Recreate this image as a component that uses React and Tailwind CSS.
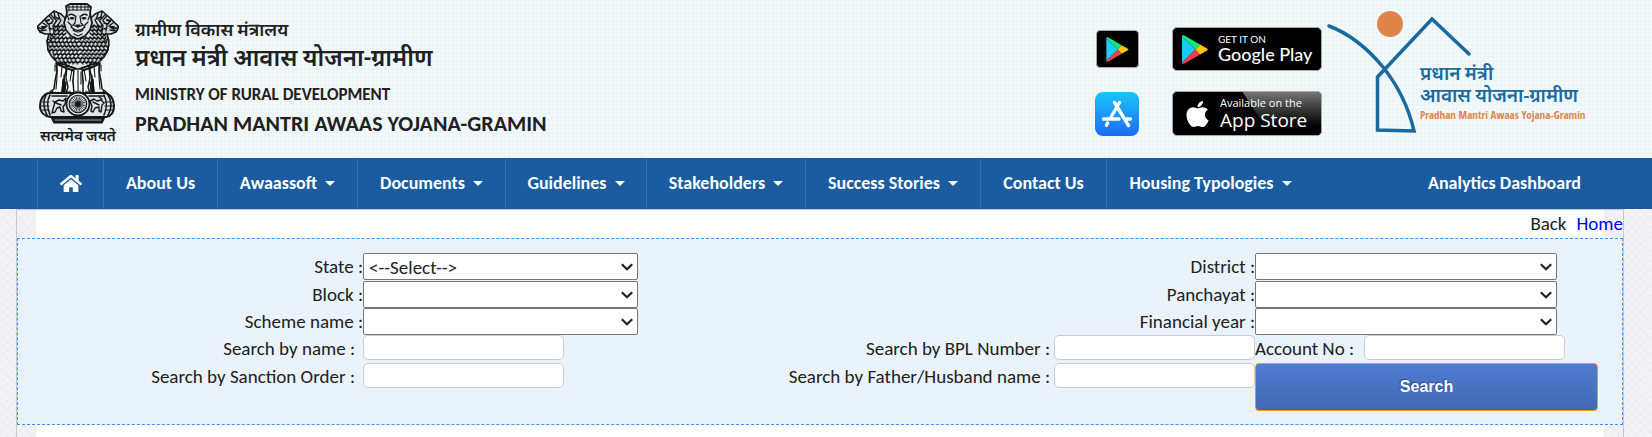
import React from "react";
import { FaHome, FaApple } from "react-icons/fa";

const MENU = [
  { label: "About Us", width: "w-[114px]" },
  { label: "Awaassoft", width: "w-[140px]", menu: true },
  { label: "Documents", width: "w-[148px]", menu: true },
  { label: "Guidelines", width: "w-[141px]", menu: true },
  { label: "Stakeholders", width: "w-[159px]", menu: true },
  { label: "Success Stories", width: "w-[175px]", menu: true },
  { label: "Contact Us", width: "w-[126px]" },
  { label: "Housing Typologies", width: "w-[208px]", menu: true },
];

/* Overlapping curls of the lions' manes, row by row: [y, half width]. */
const MANE_ROWS = [
  [22, 24], [26, 26], [30, 28], [34, 30], [38, 31],
  [42, 31], [46, 30], [50, 27], [54, 24], [58, 20],
];

function maneCurls() {
  const out = [];
  MANE_ROWS.forEach(([y, half], r) => {
    for (let x = 41 - half + (r % 2) * 2; x < 41 + half - 2; x += 4) {
      if (y < 34 && Math.abs(x + 2 - 41) < 13) continue;
      const lean = x < 41 ? -1 : 1;
      out.push(`M${x} ${y}q${2 + lean} 4 4 0`);
      out.push(`M${x + 2} ${y + 1}l${lean} 2`);
    }
  });
  return out.join("");
}

function SideLion() {
  return (
    <g>
      <path d="M28 15 24 11 17 8 10 14 4 20 0 24 3 29 8 31 12 31 10 38 11 47 15 54 20 59 27 62 32 58 30 40Z" fill="#d3d8da" strokeWidth="1.6" />
      <path d="M0 24l5 2 4-2M3 28l6-1M8 17l3 4 4-1M6 20l4 3M12 13l4 4M17 9l1 5 4 2M14 12l5 5M21 11l2 5M16 18l-4 4 1 6M20 17l-4 6 1 6M24 17l-4 7 2 5M12 25l3 1M13 31l4 3M11 36l5 3" strokeWidth="1.4" />
      <path d="M9 18l3-1M5 24h3" strokeWidth="2" />
      <path d="M19 60 20 68 18 78 17 86 14 88 11 91 22 92 25 89 26 79 29 68 29 62Z" fill="#f8fbfc" strokeWidth="1.5" />
      <path d="M30 63 29 75 31 84 29 90 36 91 38 87 36 78 39 65Z" fill="#f8fbfc" strokeWidth="1.4" />
      <path d="M20 62v12l-1 12M25 64l-1 10M35 66l-2 12M18 62v6M27 72l1 12M14 90l2-2M17 91l1-2M20 91l1-2M31 90v-2M33 90v-2" />
      <path d="M26 76l3 4-1 9-3 1z" fill="#161616" />
      <path d="M20 61l9 4 9 3" strokeWidth="2" />
    </g>
  );
}

function Abacus() {
  return (
    <g>
      <path d="M12 90C6 91 3 97 3 103c0 6 4 10 10 11h56c6-1 8-5 8-11 0-6-3-12-9-13Z" fill="#dfe3e5" strokeWidth="2" />
      <path d="M9 92c-3 5-3 13 1 20M13 92c-3 5-3 13 0 20M71 92c4 6 4 14 0 20M67 92c3 6 3 14 0 20" strokeWidth="1.6" />
      <path d="M5 99h7M4 103h8M5 107h7M68 99h8M68 103h9M68 107h8" />
      <path d="M15 93h15M52 93h15" strokeWidth="1.6" />
      <path d="M16 106l2-7 4-2 4 1 3-3-1 6-2 3 1 5-3-1-1-4-3 1-2 4-3 1zM19 100l5 2M16 98l2 2" strokeWidth="1.4" />
      <path d="M53 98l4-2 3 2 4-1 3 3-2 2-1 7-2-1v-4l-4 1-2 4-2-1 1-5zM56 99l6 3M65 96l-3-2" strokeWidth="1.4" />
      <path d="M14 114h54l-3 6H17z" fill="#161616" strokeWidth="1.2" />
      <path d="M18 117h46" stroke="#aab0b3" strokeDasharray="3 1" />
      <circle cx="41" cy="101" r="11.5" fill="#eef2f4" strokeWidth="1.8" />
      <circle cx="41" cy="101" r="8.8" />
      {Array.from({ length: 12 }, (_, i) => (
        <path key={i} d="M41 93v16" strokeWidth=".7" transform={`rotate(${i * 15} 41 101)`} />
      ))}
      <circle cx="41" cy="101" r="2" fill="#161616" />
    </g>
  );
}

function Emblem() {
  return (
    <div className="flex w-[82px] shrink-0 flex-col items-center">
      <svg viewBox="0 0 82 122" className="h-[122px] w-[82px]" fill="none" stroke="#161616" strokeWidth="1.1" strokeLinecap="round" strokeLinejoin="round" role="img" aria-label="State Emblem of India">
        <SideLion />
        <g transform="translate(82 0) scale(-1 1)"><SideLion /></g>
        <path d="M27 22 24 36 18 46 24 58 34 62 41 66 48 62 58 58 64 46 58 36 55 22Z" fill="#dfe3e5" stroke="none" />
        <path d={maneCurls()} strokeWidth="1.35" />
        <path d="M27 61 41 67 55 61" strokeWidth="1.8" />
        <path d="M37 66 36 78 37 91H46L46 78 45 66Z" fill="#f8fbfc" strokeWidth="1.5" />
        <path d="M41 67v22M44 69v12M39 90v-2M43 90v-2" />
        <path d="M29 3 33 1H50L54 4 53 10 55 20 53 27 48 33 41 36 34 33 29 27 27 20 30 10Z" fill="#dfe3e5" strokeWidth="1.8" />
        <path d="M30 4h23M31 7h21M32 2v6M36 2v5M40 2v5M44 2v5M48 2v5M51 3v4" strokeWidth="1" />
        <path d="M32 12q3-2 6 1M44 13q3-3 6-1" strokeWidth="1.6" />
        <path d="M33 15q2-1 4 0-2 2-4 0M45 15q2-1 4 0-2 2-4 0" fill="#161616" />
        <path d="M39 13 38 20 36 22 41 24 46 22 44 20 43 13M34 24q7 7 14 0M36 27q5 4 10 0M31 19l4 4M51 19l-4 4M37 31l4 2 4-2M30 12l2 5M53 12l-2 5" strokeWidth="1.2" />
        <path d="M39 22h4l-2 2z" fill="#161616" />
        <Abacus />
      </svg>
      <div className="text-[15px] leading-[22px] font-semibold whitespace-nowrap text-[#1c1c1c]">सत्यमेव जयते</div>
    </div>
  );
}

function PlayGlyph({ className }) {
  return (
    <svg viewBox="0 0 26 29" className={className} aria-hidden="true">
      <path d="M0 1.5v26L13.5 14.500z" fill="#18cdf8" />
      <path d="M0 1.500C0 0 1.500 0 2.500.600L18 9.600l-4.500 4.900z" fill="#14e57c" />
      <path d="M0 27.500C0 29 1.500 29 2.500 28.400L18 19.400l-4.500-4.900z" fill="#f33f4c" />
      <path d="M18 9.600 25 13.500q1.500 1 0 2L18 19.400l-4.500-4.900z" fill="#ffc60a" />
    </svg>
  );
}

function AppStoreIcon() {
  return (
    <svg viewBox="0 0 44 44" className="h-11 w-11" aria-hidden="true">
      <defs>
        <linearGradient id="store-blue" x1="0" y1="0" x2="0" y2="1">
          <stop offset="0" stopColor="#1bc4fb" />
          <stop offset="1" stopColor="#1d6cf2" />
        </linearGradient>
      </defs>
      <rect width="44" height="44" rx="8" fill="url(#store-blue)" />
      <path d="M19.500 10.500 33.500 33.500M24.500 10.500 16 25M8.500 27H24M29.500 27H35.500M12.600 31 11.500 33.200" fill="none" stroke="#fff" strokeWidth="3.400" strokeLinecap="round" />
    </svg>
  );
}

function StoreLinks() {
  return (
    <div className="grid shrink-0 grid-cols-[46px_150px] items-center justify-items-center gap-x-8 gap-y-5">
      <a href="#play" aria-label="Google Play" className="flex h-[38px] w-[43px] items-center justify-center rounded border border-[#a6a6a6] bg-black">
        <PlayGlyph className="h-[25px] w-[23px]" />
      </a>
      <a href="#google-play" className="flex h-11 w-[150px] items-center gap-[10px] rounded-[5px] border border-[#a6a6a6] bg-black pl-[9px] text-white">
        <PlayGlyph className="h-[29px] w-[26px]" />
        <span className="flex flex-col whitespace-nowrap">
          <span className="font-['Lato',sans-serif] text-[10px] leading-[10px]">GET IT ON</span>
          <span className="font-['Lato',sans-serif] text-[18px] leading-[20px] font-medium">Google Play</span>
        </span>
      </a>
      <a href="#ios" aria-label="App Store"><AppStoreIcon /></a>
      <a href="#app-store" className="relative flex h-[45px] w-[150px] items-center gap-[10px] overflow-hidden rounded-[5px] border border-[#a6a6a6] bg-black pl-3 text-white">
        <span className="absolute inset-0 bg-linear-to-b from-[#777777] to-black [clip-path:polygon(47%_0,100%_0,100%_100%,66%_100%)]" />
        <FaApple className="relative h-[30px] w-[25px]" />
        <span className="relative flex flex-col whitespace-nowrap">
          <span className="font-['Open_Sans',sans-serif] text-[11px] leading-[12px]">Available on the</span>
          <span className="font-['Open_Sans',sans-serif] text-[19px] leading-[22px] font-medium">App Store</span>
        </span>
      </a>
    </div>
  );
}

function SchemeLogo() {
  return (
    <div className="relative h-[126px] w-[258px] shrink-0">
      <svg viewBox="0 0 146 126" className="h-[126px] w-[146px]" fill="none" stroke="#1a6aa0" strokeWidth="3.500" strokeLinecap="round" aria-hidden="true">
        <circle cx="63" cy="15" r="13" fill="#e08549" stroke="none" />
        <path d="M2 17Q31 28 56 58 79 87 87 122L50.500 121V68L105 10 142 45" />
      </svg>
      <div className="absolute top-[54px] left-[93px] flex flex-col whitespace-nowrap">
        <span className="text-[19px] leading-[22px] font-semibold text-[#1a6aa0]">प्रधान मंत्री</span>
        <span className="text-[19px] leading-[22px] font-semibold text-[#1a6aa0]">आवास योजना-ग्रामीण</span>
        <span className="font-['Open_Sans_Condensed','Roboto_Condensed','Lato',sans-serif] text-[11px] leading-[16px] font-bold text-[#e08549]">Pradhan Mantri Awaas Yojana-Gramin</span>
      </div>
    </div>
  );
}

function Header() {
  return (
    <header className="flex h-[158px] items-start bg-[#f5fafc] bg-[linear-gradient(#e6f1f566_2px,transparent_2px),linear-gradient(90deg,#e6f1f566_2px,transparent_2px)] bg-size-[4px_4px] pr-[67px] pl-[37px]">
      <div className="pt-[3px]"><Emblem /></div>
      <div className="flex flex-col pt-[18px] pl-4 font-semibold whitespace-nowrap text-[#212121]">
        <span className="text-[18px] leading-[24px]">ग्रामीण विकास मंत्रालय</span>
        <span className="text-[24px] leading-[32px]">प्रधान मंत्री आवास योजना-ग्रामीण</span>
        <span className="pt-[9px] text-[17px] leading-[24px] font-bold">MINISTRY OF RURAL DEVELOPMENT</span>
        <span className="pt-1 text-[22px] leading-[26px] font-bold">PRADHAN MANTRI AWAAS YOJANA-GRAMIN</span>
      </div>
      <div className="ml-auto flex items-start gap-[5px]">
        <div className="pt-[27px]"><StoreLinks /></div>
        <div className="pt-[9px]"><SchemeLogo /></div>
      </div>
    </header>
  );
}

function Nav() {
  return (
    <nav className="flex h-[51px] items-stretch bg-[#1a5c9f] pr-[71px] pl-[37px] text-[18px] font-bold text-white">
      <a href="#home" aria-label="Home" className="my-px flex w-[66px] items-center justify-center border-l border-[#376fae]">
        <FaHome className="h-[21px] w-[22px]" />
      </a>
      {MENU.map((m) => (
        <a key={m.label} href="#menu" className={`my-px flex ${m.width} items-center justify-center gap-2 border-l border-[#376fae] whitespace-nowrap`}>
          {m.label}
          {m.menu && (
            <svg viewBox="0 0 10 5" className="h-[5px] w-[10px]" aria-hidden="true"><path d="M0 0h10L5 5z" fill="#fff" /></svg>
          )}
        </a>
      ))}
      <a href="#analytics" className="ml-auto flex items-center whitespace-nowrap">Analytics Dashboard</a>
    </nav>
  );
}

const LABEL = "text-right leading-[27px] whitespace-nowrap";
const INPUT = "h-[25px] w-[201px] rounded-[5px] border border-[#cccccc] bg-white px-2";

function Select({ id, value, width }) {
  return (
    <div className={`relative ${width}`}>
      <select id={id} className="block h-[27px] w-full appearance-none rounded-[2px] border border-[#767676] bg-white pl-[5px] text-[#212121]">
        <option>{value}</option>
      </select>
      <svg viewBox="0 0 12 8" className="pointer-events-none absolute top-[10px] right-[5px] h-2 w-3" fill="none" stroke="#212121" strokeWidth="2.2" aria-hidden="true">
        <path d="M.8 1.200 6 6.200 11.200 1.200" />
      </svg>
    </div>
  );
}

function SelectRow({ left, right, value }) {
  return (
    <>
      <label htmlFor={left} className={LABEL}>{left} :</label>
      <Select id={left} value={value} width="w-full" />
      <label htmlFor={right} className={LABEL}>{right} :</label>
      <Select id={right} value="" width="w-[302px]" />
    </>
  );
}

function SearchForm() {
  return (
    <form className="grid grid-cols-[345fr_275fr_617fr_367fr] grid-rows-[28px_27px_27px_28px_48px] items-start border border-dashed border-[#3399ff] bg-[#eaf3fb] pt-[14px] pb-[13px]">
      <SelectRow left="State" right="District" value="<--Select-->" />
      <SelectRow left="Block" right="Panchayat" value="" />
      <SelectRow left="Scheme name" right="Financial year" value="" />

      <label htmlFor="name" className={`${LABEL} pr-2`}>Search by name :</label>
      <input id="name" type="text" className={INPUT} />
      <div className="flex items-start justify-end gap-1">
        <label htmlFor="bpl" className={LABEL}>Search by BPL Number :</label>
        <input id="bpl" type="text" className={INPUT} />
      </div>
      <div className="flex items-start gap-2">
        <label htmlFor="account" className="w-[101px] leading-[27px] whitespace-nowrap">Account No :</label>
        <input id="account" type="text" className={INPUT} />
      </div>

      <label htmlFor="order" className={`${LABEL} pr-2`}>Search by Sanction Order :</label>
      <input id="order" type="text" className={INPUT} />
      <div className="flex items-start justify-end gap-1">
        <label htmlFor="relative" className={LABEL}>Search by Father/Husband name :</label>
        <input id="relative" type="text" className={INPUT} />
      </div>
      <button type="button" className="mr-6 h-12 rounded border border-[#ff9900] bg-linear-to-b from-[#4f7bd3] to-[#4268b0] font-['Liberation_Sans',sans-serif] text-[16px] font-bold text-white [text-shadow:-1px_-1px_1px_#2b4a85]">
        Search
      </button>
    </form>
  );
}

export default function App() {
  return (
    <div className="flex min-h-screen flex-col bg-white font-['Carlito','Lato','Noto_Sans_Devanagari','Noto_Sans',sans-serif] text-[19px] text-[#212121]">
      <Header />
      <Nav />
      <main className="flex grow flex-col bg-[#f2f2f7] bg-[repeating-linear-gradient(45deg,#ececf1_0_1px,transparent_1px_6px),repeating-linear-gradient(-45deg,#ececf1_0_1px,transparent_1px_6px)] pr-7 pl-4">
        <div className="flex grow flex-col border border-b-0 border-[#c8c8cc] bg-[linear-gradient(#ffffff,#ffffff)] bg-size-[calc(100%_-_38px)_100%] bg-center bg-no-repeat">
          <div className="flex h-7 items-center justify-end gap-[10px]">
            <a href="#back">Back</a>
            <a href="#home" className="text-[#0000ee]">Home</a>
          </div>
          <SearchForm />
        </div>
      </main>
    </div>
  );
}
